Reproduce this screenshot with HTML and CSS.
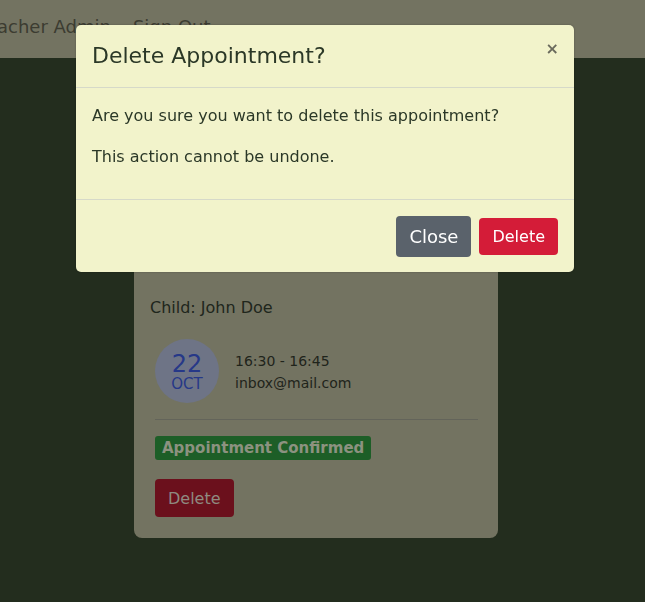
FILE: index.html
```html
<!DOCTYPE html>
<html>
<head>
<meta charset="utf-8">
<link rel="stylesheet" href="styles.css">
</head>
<body>
<nav class="navbar">
  <span class="brand">Teacher Admin</span>
  <a class="nav-link">Sign Out</a>
</nav>
<main class="page">
  <div class="card">
    <h3 class="card-title">Appointment</h3>
    <p class="child">Child: John Doe</p>
    <div class="slot">
      <div class="date">
        <span class="day">22</span>
        <span class="month">OCT</span>
      </div>
      <div class="info">
        <div>16:30 - 16:45</div>
        <div>inbox@mail.com</div>
      </div>
    </div>
    <hr class="divider">
    <div class="status"><span class="badge">Appointment Confirmed</span></div>
    <button class="btn-card-delete">Delete</button>
  </div>
</main>
<div class="backdrop"></div>
<div class="modal">
  <div class="modal-header">
    <h5 class="modal-title">Delete Appointment?</h5>
    <span class="close">&times;</span>
  </div>
  <div class="modal-body">
    <p>Are you sure you want to delete this appointment?</p>
    <p>This action cannot be undone.</p>
  </div>
  <div class="modal-footer">
    <button class="btn btn-secondary">Close</button>
    <button class="btn btn-danger">Delete</button>
  </div>
</div>
</body>
</html>
```
FILE: styles.css
```css
* { box-sizing: border-box; }
html, body { margin: 0; height: 100%; }
body {
  background: #232d1e;
  font-family: "DejaVu Sans", sans-serif;
  overflow: hidden;
}
.navbar {
  height: 58px;
  background: #737361;
  display: flex;
  align-items: center;
  gap: 22px;
  padding-bottom: 6px;
  color: #3c3c31;
  font-size: 18px;
  white-space: nowrap;
}
.brand { margin-left: -22px; }
.page {
  display: flex;
  padding: 58px 0 0 134px;
}
.card {
  width: 364px;
  background: #737361;
  border-radius: 8px;
  padding: 16px 16px 21px 16px;
  color: #20261c;
}
.card-title { margin: 0 0 140px 0; font-weight: normal; font-size: 20px; }
.child { margin: 0; font-size: 16px; line-height: 24px; }
.slot {
  display: flex;
  align-items: center;
  gap: 16px;
  margin: 19px 0 0 5px;
}
.date {
  width: 64px;
  height: 64px;
  border-radius: 50%;
  background: #6e7486;
  color: #263888;
  display: flex;
  flex-direction: column;
  align-items: center;
  justify-content: center;
  padding-top: 4px;
}
.day { font-size: 24px; line-height: 22px; }
.month { font-size: 15px; line-height: 18px; }
.info { font-size: 14px; line-height: 22px; color: #1f241b; margin-top: 2px; }
.divider {
  border: 0;
  border-top: 1px solid #63645a;
  margin: 16px 4px 16px 5px;
}
.status { margin-left: 5px; }
.badge {
  display: inline-block;
  background: #1d5e27;
  color: #8c9280;
  font-weight: bold;
  font-size: 15px;
  line-height: 24px;
  padding: 0 7px;
  border-radius: 3px;
}
.btn-card-delete {
  display: block;
  margin: 19px 0 0 5px;
  background: #6b101c;
  color: #8f8a80;
  border: 0;
  border-radius: 4px;
  font-family: inherit;
  font-size: 16px;
  height: 38px;
  padding: 0 13px;
}
.backdrop {
  position: fixed;
  inset: 0;
  background: rgba(0,0,0,0);
}
.modal {
  position: fixed;
  left: 76px;
  top: 25px;
  width: 498px;
  background: #f2f3cb;
  border-radius: 5px;
  color: #2b3827;
  box-shadow: 0 0 2px rgba(0,0,0,0.3);
}
.modal-header {
  display: flex;
  justify-content: space-between;
  align-items: flex-start;
  padding: 17px 16px 0 16px;
  height: 63px;
  border-bottom: 1px solid #d6d9c9;
}
.modal-title { margin: 0; font-weight: normal; font-size: 22px; line-height: 28px; }
.close { font-size: 16px; font-weight: bold; color: #6b6b5d; margin-top: -3px; margin-right: -1px; }
.modal-body { padding: 16px 16px 30px 16px; font-size: 16px; }
.modal-body p { margin: 0 0 17px 0; line-height: 24px; }
.modal-body p:last-child { margin-bottom: 0; }
.modal-footer {
  border-top: 1px solid #d6d9c9;
  padding: 16px 16px 15px 16px;
  display: flex;
  justify-content: flex-end;
  align-items: center;
  gap: 8px;
}
.btn {
  border: 0;
  border-radius: 4px;
  color: #fff;
  font-family: inherit;
}
.btn-secondary { background: #5a626b; font-size: 18px; height: 41px; padding: 0 13px; }
.btn-danger { background: #d41c38; font-size: 16px; height: 37px; padding: 0 13px; }
```
